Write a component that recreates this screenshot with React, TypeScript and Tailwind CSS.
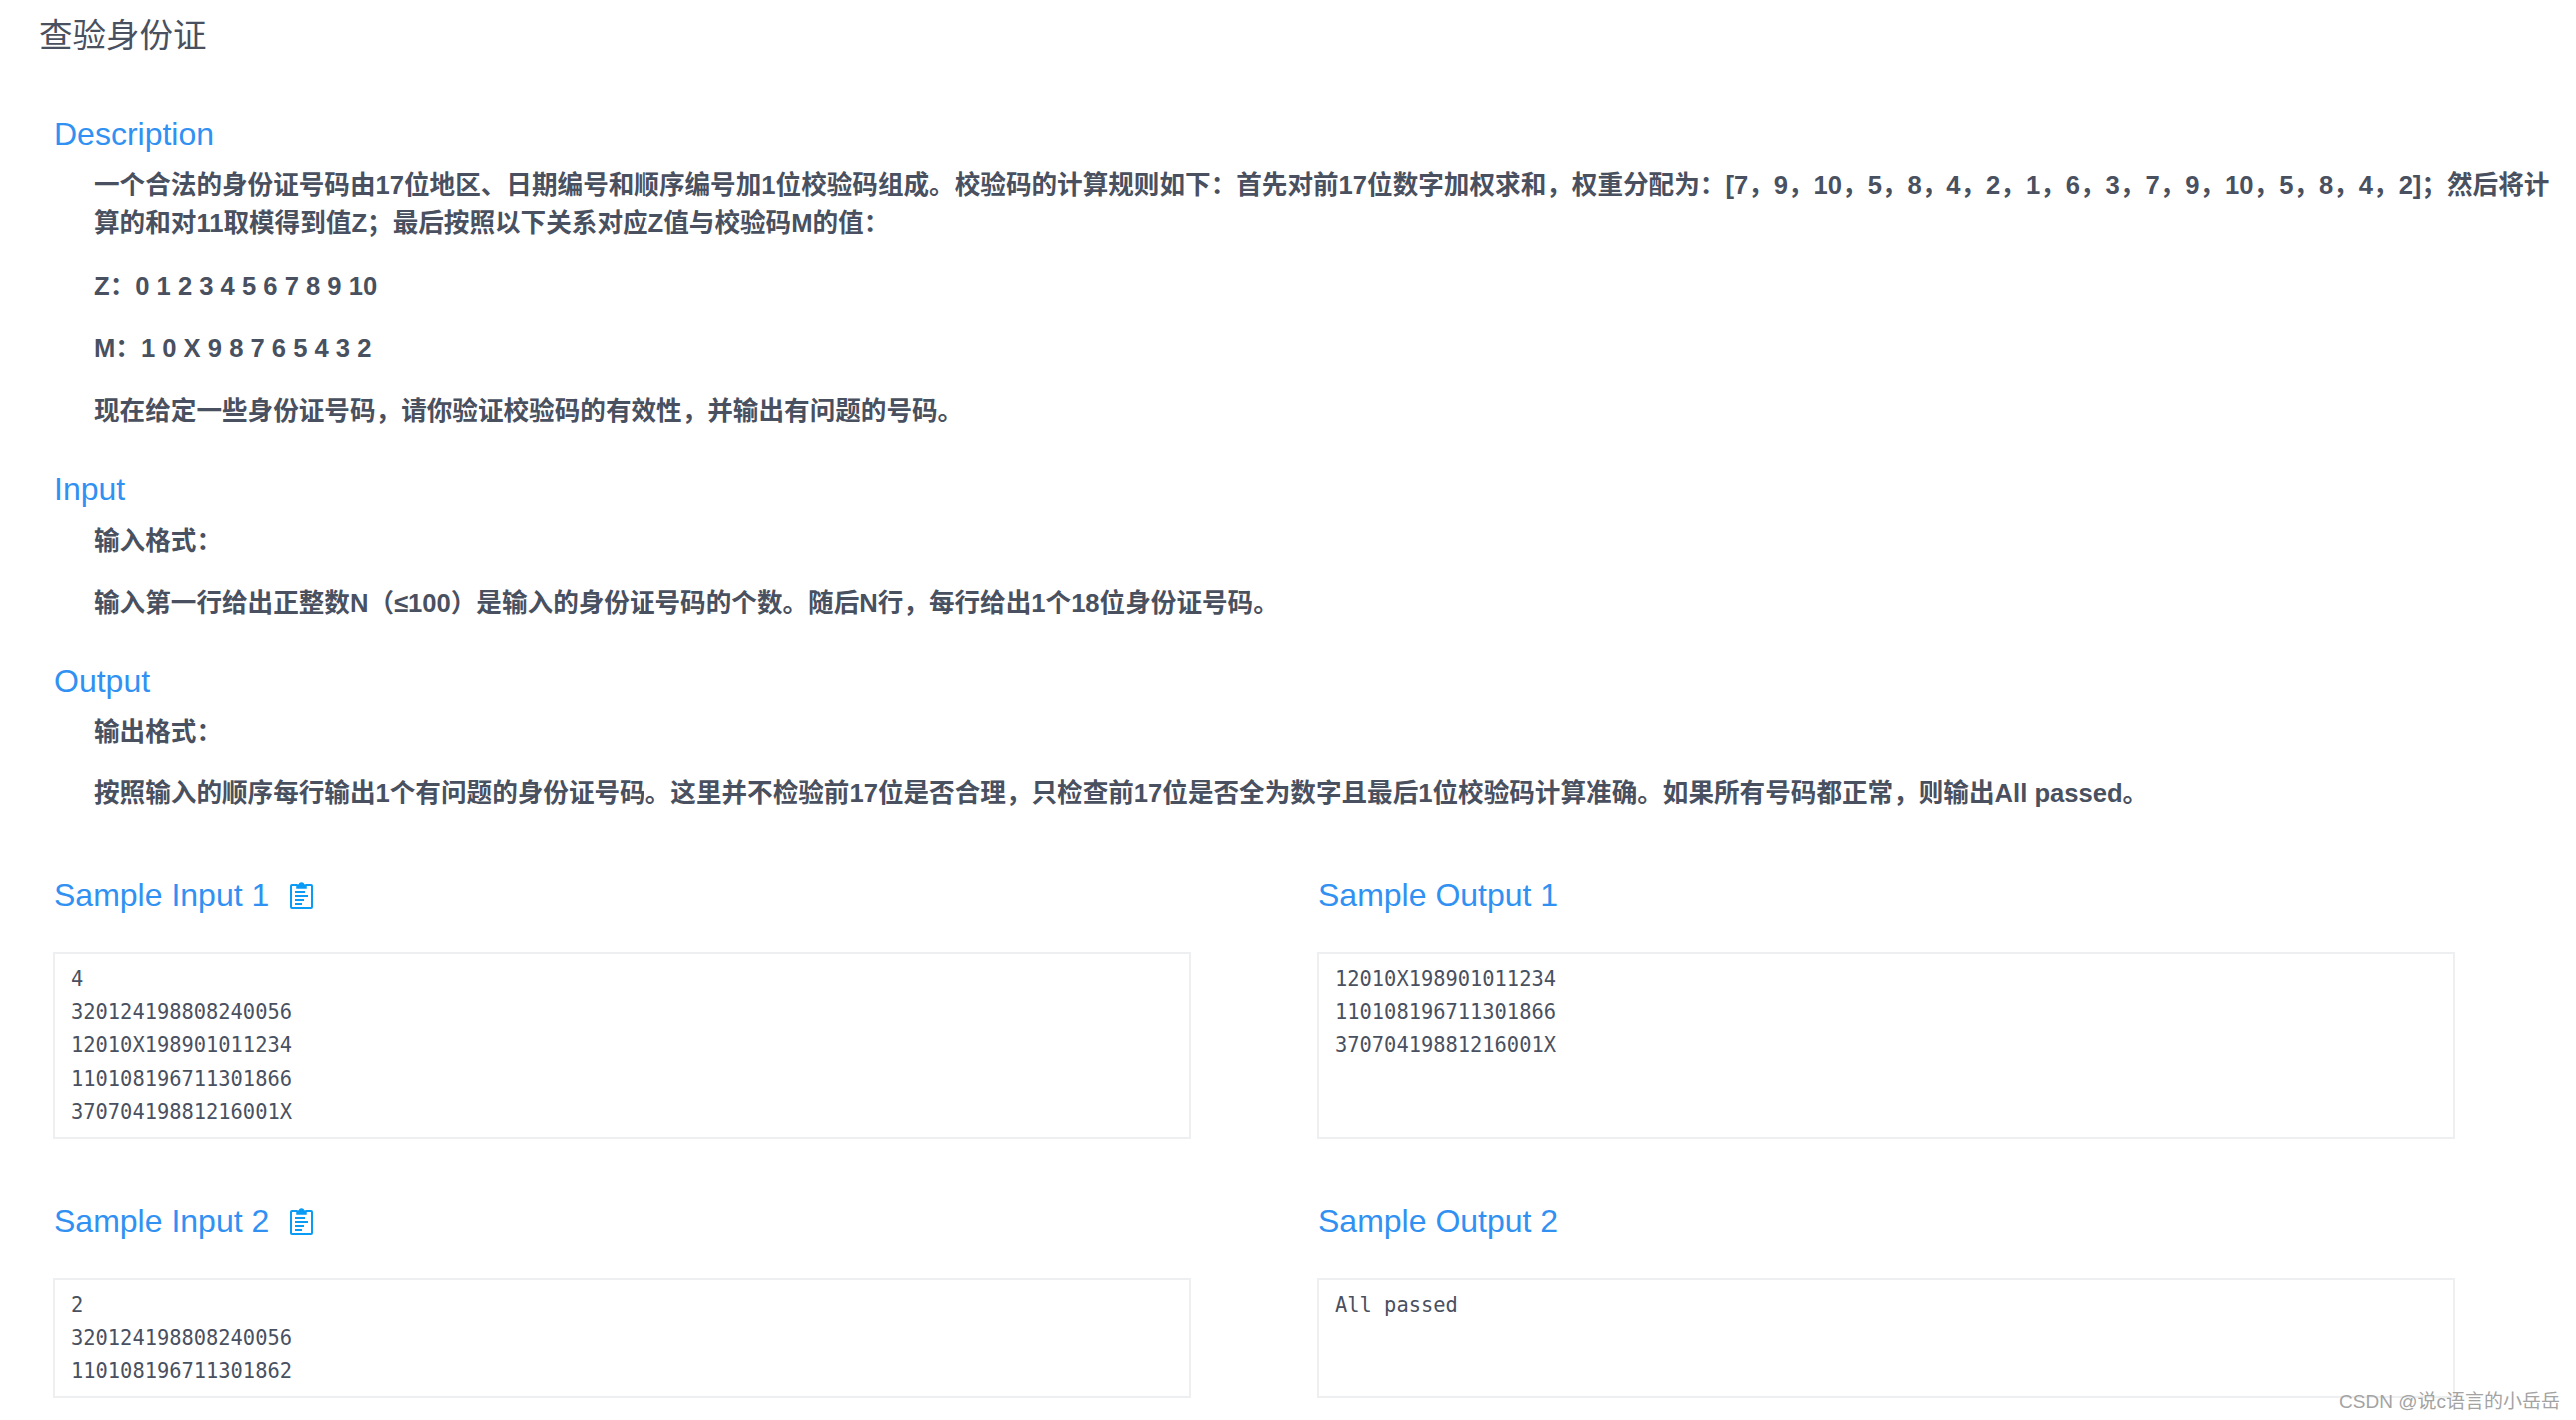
const sans = "font-['Liberation_Sans','Noto_Sans_CJK_SC',sans-serif]";

function Clip() {
  return (
    <svg width="23" height="28" viewBox="0 0 23 28" fill="none" className="text-[#0a9bf5]" stroke="currentColor" strokeWidth="2">
      <path d="M7 4H2a1 1 0 0 0-1 1v21a1 1 0 0 0 1 1h19a1 1 0 0 0 1-1V5a1 1 0 0 0-1-1h-5" />
      <path d="M7 7V4h2.5a2 2 0 0 1 4 0H16v3z" fill="currentColor" strokeWidth="1.5" />
      <path d="M5 11h10M5 15h13M5 19h9M5 23h7" strokeWidth="2" />
    </svg>
  );
}

function Heading({ children }: { children: React.ReactNode }) {
  return <div className="pl-px text-[32px] leading-[40px] text-[#3091f2]">{children}</div>;
}

function P({ children, className = "" }: { children: React.ReactNode; className?: string }) {
  return <p className={`pl-[41px] text-[25.6px] leading-[38.4px] font-bold text-[#495060] ${className}`}>{children}</p>;
}

function Sample({ title, lines, h, icon }: { title: string; lines: string[]; h: string; icon?: boolean }) {
  return (
    <div className="flex flex-col">
      <div className="flex items-center gap-[21px]">
        <Heading>{title}</Heading>
        {icon && <Clip />}
      </div>
      <pre className={`mt-[37px] ${h} border-2 border-[#eeeff1] px-[16px] pt-[9px] font-['DejaVu_Sans_Mono',monospace] text-[20.4px] leading-[33.4px] text-[#495060]`}>
        {lines.join("\n")}
      </pre>
    </div>
  );
}

export default function App() {
  return (
    <div className={`relative h-[1421px] overflow-hidden bg-white ${sans}`}>
      <div className="pt-[16px] pl-[39px] text-[33.5px] leading-[40px] text-[#495060]">查验身份证</div>
      <div className="pl-[53px] pr-[18px] pt-[58px]">
        <Heading>Description</Heading>
        <P className="mt-[12px]">
          一个合法的身份证号码由17位地区、日期编号和顺序编号加1位校验码组成。校验码的计算规则如下：首先对前17位数字加权求和，权重分配为：[7，9，10，5，8，4，2，1，6，3，7，9，10，5，8，4，2]；然后将计算的和对11取模得到值Z；最后按照以下关系对应Z值与校验码M的值：
        </P>
        <P className="mt-[24px]">Z：0 1 2 3 4 5 6 7 8 9 10</P>
        <P className="mt-[24px]">M：1 0 X 9 8 7 6 5 4 3 2</P>
        <P className="mt-[24px]">现在给定一些身份证号码，请你验证校验码的有效性，并输出有问题的号码。</P>
        <div className="mt-[39px]"><Heading>Input</Heading></div>
        <P className="mt-[13px]">输入格式：</P>
        <P className="mt-[24px]">输入第一行给出正整数N（≤100）是输入的身份证号码的个数。随后N行，每行给出1个18位身份证号码。</P>
        <div className="mt-[38px]"><Heading>Output</Heading></div>
        <P className="mt-[13px]">输出格式：</P>
        <P className="mt-[23px]">按照输入的顺序每行输出1个有问题的身份证号码。这里并不检验前17位是否合理，只检查前17位是否全为数字且最后1位校验码计算准确。如果所有号码都正常，则输出All passed。</P>
        <div className="mt-[62px] grid w-[2404px] grid-cols-[1139px_1139px] justify-between gap-y-[62px]">
          <Sample title="Sample Input 1" icon h="h-[187px]" lines={["4", "320124198808240056", "12010X198901011234", "110108196711301866", "37070419881216001X"]} />
          <Sample title="Sample Output 1" h="h-[187px]" lines={["12010X198901011234", "110108196711301866", "37070419881216001X"]} />
          <Sample title="Sample Input 2" icon h="h-[120px]" lines={["2", "320124198808240056", "110108196711301862"]} />
          <Sample title="Sample Output 2" h="h-[120px]" lines={["All passed"]} />
        </div>
      </div>
      <div className="absolute right-[16px] bottom-[6px] text-[19px] leading-[24px] text-[#a3a3a3]">CSDN @说c语言的小岳岳</div>
    </div>
  );
}
